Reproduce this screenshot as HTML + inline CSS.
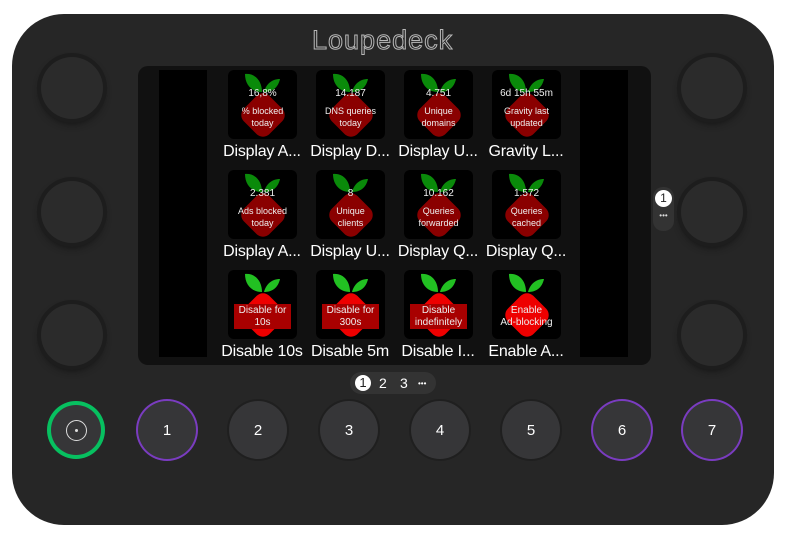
<!DOCTYPE html><html><head><style>
body{margin:0;width:789px;height:546px;background:#fff;position:relative;overflow:hidden;font-family:"Liberation Sans",sans-serif}
.dev{position:absolute;left:12px;top:14px;width:762px;height:511px;background:#262626;border-radius:52px}
.logo{position:absolute;left:312px;top:25px;color:transparent;-webkit-text-stroke:1px #b8b8b8;font-size:27px;letter-spacing:1px}
.scr{position:absolute;left:138px;top:66px;width:513px;height:299px;background:#111;border-radius:10px}
.side{position:absolute;top:4px;width:48px;height:287px;background:#000}
.tile{position:absolute;width:69px;height:69px;background:#000;border-radius:6px;overflow:hidden}
.tile svg{position:absolute;left:0;top:0}
.t{position:absolute;left:0;width:69px;text-align:center;color:#eee;font-size:9px;line-height:12px}
.lab{position:absolute;color:#fff;font-size:16px;width:92px;text-align:center;letter-spacing:-0.2px}
.knob{position:absolute;width:62px;height:62px;border-radius:50%;background:#2b2b2b;box-shadow:0 0 0 4px #1d1d1d,0 4px 8px #111}
.btn{position:absolute;width:58px;height:58px;border-radius:50%;background:#363638;box-shadow:0 0 0 2px #1f1f1f;color:#fff;font-size:15px;display:flex;align-items:center;justify-content:center}
.pg{position:absolute;left:350px;top:372px;width:86px;height:22px;border-radius:11px;background:#333;color:#fff;font-size:14px}
</style></head><body>
<div class="dev"></div>
<div class="logo">Loupedeck</div>
<div class="knob" style="left:41px;top:57px"></div>
<div class="knob" style="left:41px;top:181px"></div>
<div class="knob" style="left:41px;top:304px"></div>
<div class="knob" style="left:681px;top:57px"></div>
<div class="knob" style="left:681px;top:181px"></div>
<div class="knob" style="left:681px;top:304px"></div>
<div class="scr">
<div class="side" style="left:21px"></div><div class="side" style="left:442px"></div>
</div>
<svg width="0" height="0" style="position:absolute"><defs>
<g id="lv"><path d="M17 4 C28 3 34 12 34 22 C24 22 17 15 17 4Z" fill="#0a8a0a"/><path d="M52 9 C50 18 44 22 36 22 C38 14 44 9 52 9Z" fill="#0a8a0a"/></g>
<g id="lvb"><path d="M17 4 C28 3 34 12 34 22 C24 22 17 15 17 4Z" fill="#22c022"/><path d="M52 9 C50 18 44 22 36 22 C38 14 44 9 52 9Z" fill="#22c022"/></g>
<rect id="bd" x="17" y="27" width="36" height="36" rx="9" transform="rotate(45 35 45)"/>
</defs></svg>
<!-- row 1 -->
<div class="tile" style="left:228px;top:70px"><svg width="69" height="69"><use href="#bd" fill="#8a0000"/><use href="#lv"/></svg><div class="t" style="top:18px;font-size:10px">16,8%</div><div class="t" style="top:35px">% blocked<br>today</div></div>
<div class="tile" style="left:316px;top:70px"><svg width="69" height="69"><use href="#bd" fill="#8a0000"/><use href="#lv"/></svg><div class="t" style="top:18px;font-size:10px">14.187</div><div class="t" style="top:35px">DNS queries<br>today</div></div>
<div class="tile" style="left:404px;top:70px"><svg width="69" height="69"><use href="#bd" fill="#8a0000"/><use href="#lv"/></svg><div class="t" style="top:18px;font-size:10px">4.751</div><div class="t" style="top:35px">Unique<br>domains</div></div>
<div class="tile" style="left:492px;top:70px"><svg width="69" height="69"><use href="#bd" fill="#8a0000"/><use href="#lv"/></svg><div class="t" style="top:18px;font-size:10px">6d 15h 55m</div><div class="t" style="top:35px">Gravity last<br>updated</div></div>
<!-- row 2 -->
<div class="tile" style="left:228px;top:170px"><svg width="69" height="69"><use href="#bd" fill="#8a0000"/><use href="#lv"/></svg><div class="t" style="top:18px;font-size:10px">2.381</div><div class="t" style="top:35px">Ads blocked<br>today</div></div>
<div class="tile" style="left:316px;top:170px"><svg width="69" height="69"><use href="#bd" fill="#8a0000"/><use href="#lv"/></svg><div class="t" style="top:18px;font-size:10px">8</div><div class="t" style="top:35px">Unique<br>clients</div></div>
<div class="tile" style="left:404px;top:170px"><svg width="69" height="69"><use href="#bd" fill="#8a0000"/><use href="#lv"/></svg><div class="t" style="top:18px;font-size:10px">10.162</div><div class="t" style="top:35px">Queries<br>forwarded</div></div>
<div class="tile" style="left:492px;top:170px"><svg width="69" height="69"><use href="#bd" fill="#8a0000"/><use href="#lv"/></svg><div class="t" style="top:18px;font-size:10px">1.572</div><div class="t" style="top:35px">Queries<br>cached</div></div>
<!-- row 3 -->
<div class="tile" style="left:228px;top:270px"><svg width="69" height="69"><use href="#bd" fill="#ee0000"/><use href="#lvb"/><rect x="6" y="34" width="57" height="25" fill="#a80000"/></svg><div class="t" style="top:35px;font-size:10px">Disable for<br>10s</div></div>
<div class="tile" style="left:316px;top:270px"><svg width="69" height="69"><use href="#bd" fill="#ee0000"/><use href="#lvb"/><rect x="6" y="34" width="57" height="25" fill="#a80000"/></svg><div class="t" style="top:35px;font-size:10px">Disable for<br>300s</div></div>
<div class="tile" style="left:404px;top:270px"><svg width="69" height="69"><use href="#bd" fill="#ee0000"/><use href="#lvb"/><rect x="6" y="34" width="57" height="25" fill="#a80000"/></svg><div class="t" style="top:35px;font-size:10px">Disable<br>indefinitely</div></div>
<div class="tile" style="left:492px;top:270px"><svg width="69" height="69"><use href="#bd" fill="#ee0000"/><use href="#lvb"/></svg><div class="t" style="top:35px;font-size:10px">Enable<br>Ad-blocking</div></div>
<div class="lab" style="left:216px;top:143px">Display A...</div>
<div class="lab" style="left:304px;top:143px">Display D...</div>
<div class="lab" style="left:392px;top:143px">Display U...</div>
<div class="lab" style="left:480px;top:143px">Gravity L...</div>
<div class="lab" style="left:216px;top:243px">Display A...</div>
<div class="lab" style="left:304px;top:243px">Display U...</div>
<div class="lab" style="left:392px;top:243px">Display Q...</div>
<div class="lab" style="left:480px;top:243px">Display Q...</div>
<div class="lab" style="left:216px;top:343px">Disable 10s</div>
<div class="lab" style="left:304px;top:343px">Disable 5m</div>
<div class="lab" style="left:392px;top:343px">Disable I...</div>
<div class="lab" style="left:480px;top:343px">Enable A...</div>
<div style="position:absolute;left:653px;top:187px;width:21px;height:44px;border-radius:10px;background:#333"></div>
<div style="position:absolute;left:655px;top:190px;width:17px;height:17px;border-radius:50%;background:#fff;color:#222;font-size:12px;text-align:center;line-height:17px">1</div>
<div style="position:absolute;left:655px;top:211px;width:17px;color:#ddd;font-size:8px;text-align:center">•••</div>
<div class="pg"><span style="position:absolute;left:5px;top:3px;width:16px;height:16px;border-radius:50%;background:#fff;color:#222;font-size:13px;text-align:center;line-height:16px">1</span><span style="position:absolute;left:29px;top:3px">2</span><span style="position:absolute;left:50px;top:3px">3</span><span style="position:absolute;left:68px;top:7px;font-size:8px">•••</span></div>
<div class="btn" style="box-shadow:0 0 0 4px #07c060;width:50px;height:50px;left:51px;top:405px"><div style="width:19px;height:19px;border:1px solid #ddd;border-radius:50%;display:flex;align-items:center;justify-content:center"><div style="width:3px;height:3px;background:#ddd;border-radius:50%"></div></div></div>
<div class="btn" style="left:138px;top:401px;box-shadow:0 0 0 2px #7a3cc0">1</div>
<div class="btn" style="left:229px;top:401px">2</div>
<div class="btn" style="left:320px;top:401px">3</div>
<div class="btn" style="left:411px;top:401px">4</div>
<div class="btn" style="left:502px;top:401px">5</div>
<div class="btn" style="left:593px;top:401px;box-shadow:0 0 0 2px #7a3cc0">6</div>
<div class="btn" style="left:683px;top:401px;box-shadow:0 0 0 2px #7a3cc0">7</div>
</body></html>
